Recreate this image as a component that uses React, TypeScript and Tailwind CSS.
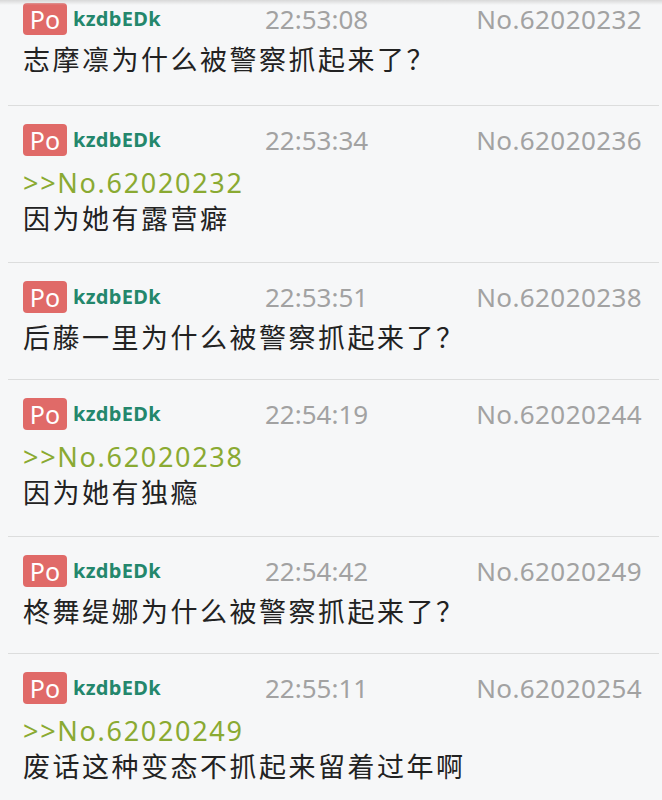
import React from 'react'

interface Post {
  user: string
  time: string
  no: string
  reply?: string
  text: string
}

const posts: Post[] = [
  { user: 'kzdbEDk', time: '22:53:08', no: '62020232', text: '志摩凛为什么被警察抓起来了？' },
  { user: 'kzdbEDk', time: '22:53:34', no: '62020236', reply: '62020232', text: '因为她有露营癖' },
  { user: 'kzdbEDk', time: '22:53:51', no: '62020238', text: '后藤一里为什么被警察抓起来了？' },
  { user: 'kzdbEDk', time: '22:54:19', no: '62020244', reply: '62020238', text: '因为她有独瘾' },
  { user: 'kzdbEDk', time: '22:54:42', no: '62020249', text: '柊舞缇娜为什么被警察抓起来了？' },
  { user: 'kzdbEDk', time: '22:55:11', no: '62020254', reply: '62020249', text: '废话这种变态不抓起来留着过年啊' },
]

const PostRow = ({ post, first }: { post: Post; first: boolean }) => {
  // first post is cut off at the top of the screenshot
  const pad = first ? 'mt-[-15px] pb-[28px]' : post.reply ? 'pb-[26px]' : 'pb-[24px]'
  return (
    <div className={`border-b border-[#dcdddd] pl-[15px] pr-[17px] pt-[18px] ${pad}`}>
      {/* Header */}
      <div className="flex h-[32px] items-center">
        <div className="flex w-[242px] items-center">
          <span className="flex h-[32px] w-[44px] items-center justify-center rounded-[4px] bg-[#e06a68] text-[25px] leading-none text-white">
            Po
          </span>
          <span className="ml-[6px] text-[20px] font-bold tracking-[0.3px] text-[#24876c]">
            {post.user}
          </span>
        </div>
        <span className="text-[26px] leading-none text-[#a2a2a2]">{post.time}</span>
        <span className="ml-auto text-[26px] leading-none tracking-[0.4px] text-[#a2a2a2]">
          No.{post.no}
        </span>
      </div>

      {/* Reply quote */}
      {post.reply && (
        <div className="mt-[8px] text-[27px] leading-[38px] tracking-[1.7px] text-[#8aaa32]">
          &gt;&gt;No.{post.reply}
        </div>
      )}

      {/* Body */}
      <div
        className={`text-[27px] leading-[34px] tracking-[2.5px] text-[#222222] ${
          post.reply ? '' : 'mt-[8px]'
        }`}
      >
        {post.text}
      </div>
    </div>
  )
}

export default function App() {
  return (
    <div
      className="relative h-[800px] w-[662px] overflow-hidden bg-[#f6f7f8]"
      style={{ fontFamily: '"Noto Sans", "Noto Sans CJK SC", sans-serif' }}
    >
      <div className="pointer-events-none absolute inset-x-0 top-0 z-10 h-[5px] bg-gradient-to-b from-[#d8d8d8] to-transparent" />
      <div className="ml-[8px] mr-[3px]">
        {posts.map((post, i) => (
          <PostRow key={post.no} post={post} first={i === 0} />
        ))}
      </div>
    </div>
  )
}
